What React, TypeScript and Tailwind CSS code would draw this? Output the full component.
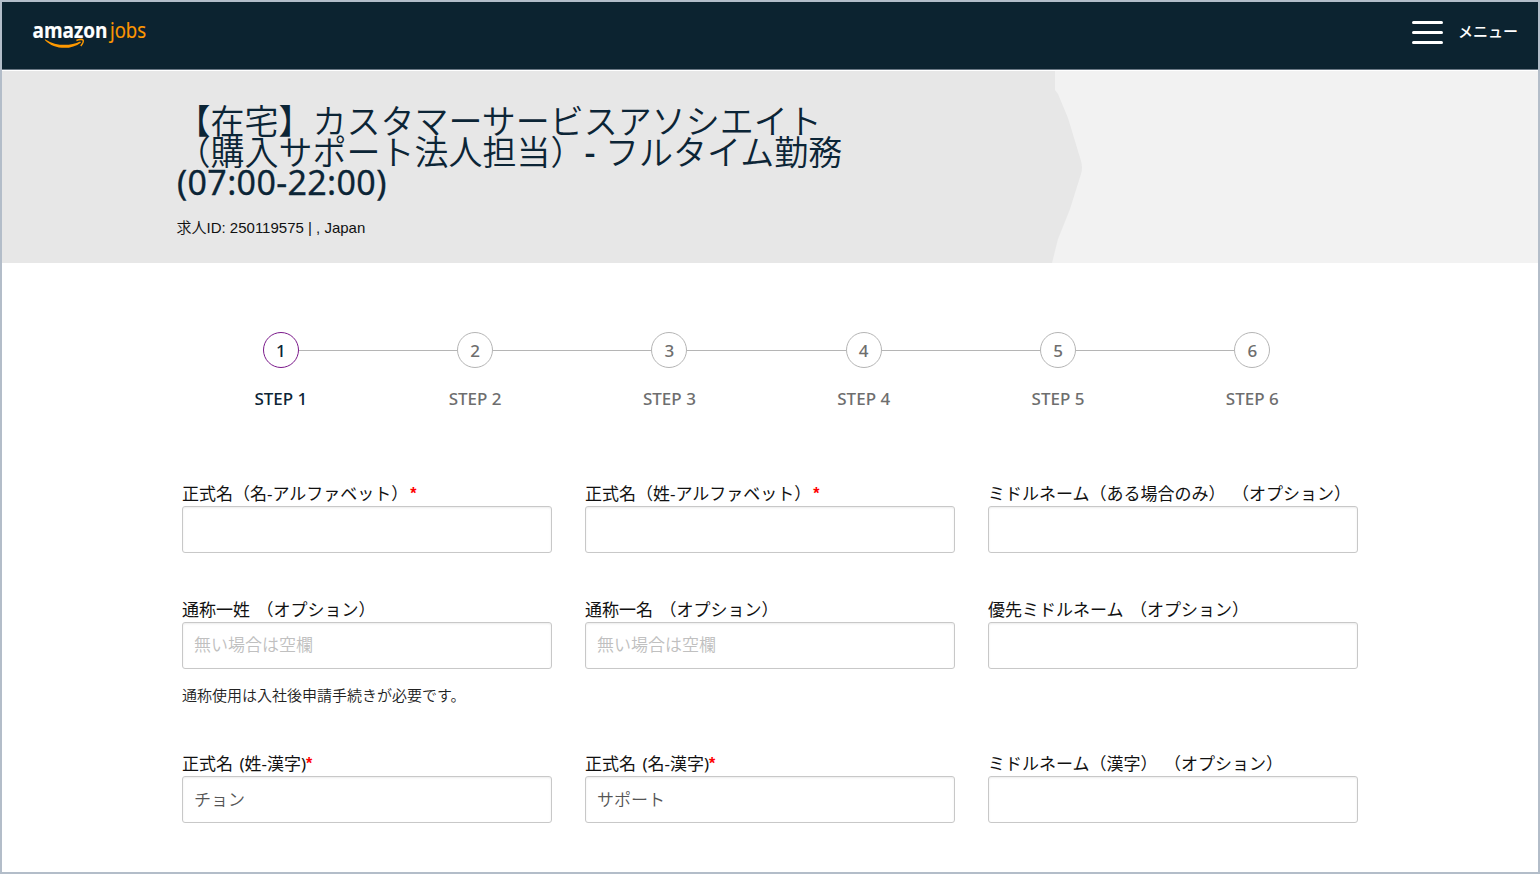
import clsx from "clsx";

interface Field {
  label: string;
  required?: boolean;
  placeholder?: string;
  value?: string;
  hint?: string;
}

const steps = [1, 2, 3, 4, 5, 6];

const rows: Field[][] = [
  [
    { label: "正式名（名-アルファベット）", required: true },
    { label: "正式名（姓-アルファベット）", required: true },
    { label: "ミドルネーム（ある場合のみ） （オプション）" },
  ],
  [
    {
      label: "通称一姓 （オプション）",
      placeholder: "無い場合は空欄",
      hint: "通称使用は入社後申請手続きが必要です。",
    },
    { label: "通称一名 （オプション）", placeholder: "無い場合は空欄" },
    { label: "優先ミドルネーム （オプション）" },
  ],
  [
    { label: "正式名 (姓-漢字)", required: true, value: "チョン" },
    { label: "正式名 (名-漢字)", required: true, value: "サポート" },
    { label: "ミドルネーム（漢字） （オプション）" },
  ],
];

function Logo() {
  return (
    <svg
      className="overflow-visible"
      width="118"
      height="34"
      viewBox="0 0 118 34"
      aria-label="amazon jobs"
    >
      <g fontFamily="'Open Sans', 'Noto Sans', sans-serif">
        <text
          x="1.5"
          y="22"
          fontSize="22"
          fontWeight="700"
          fill="#fff"
          stroke="#fff"
          strokeWidth="0.2"
          textLength="75"
          lengthAdjust="spacingAndGlyphs"
        >
          amazon
        </text>
        <text
          x="79"
          y="22"
          fontSize="22.5"
          fill="#ff9900"
          stroke="#ff9900"
          strokeWidth="0.2"
          textLength="36"
          lengthAdjust="spacingAndGlyphs"
        >
          jobs
        </text>
      </g>
      <path
        d="M14 24.2C23 33.6 40 34.4 50 26.4L49.2 25.4C39 30.4 25 30.2 14.4 23.4C13.8 23.2 13.6 23.8 14 24.2Z"
        fill="#ff9900"
      />
      <path
        d="M45.4 24.5C48.2 23.4 51.4 23.3 52 24C52.6 24.9 51.4 28 49.8 30"
        fill="none"
        stroke="#ff9900"
        strokeWidth="1.5"
      />
    </svg>
  );
}

function Header() {
  return (
    <header className="flex h-[68px] items-start justify-between border-b border-[#6b7885] bg-[#0c2330] pr-5 pl-[29px]">
      <div className="pt-[14px]">
        <Logo />
      </div>
      <button className="flex items-start gap-[15px] pt-[19px]">
        <span className="flex w-[31px] flex-col gap-[7px]">
          <span className="h-[3px] rounded-full bg-white" />
          <span className="h-[3px] rounded-full bg-white" />
          <span className="h-[3px] rounded-full bg-white" />
        </span>
        <span className="-mt-0.5 text-[15px] leading-6 font-medium text-white">
          メニュー
        </span>
      </button>
    </header>
  );
}

function Hero() {
  return (
    <section className="relative mt-px h-[192px] bg-[#f2f2f2]">
      <svg
        className="absolute inset-0"
        width="1082"
        height="192"
        viewBox="0 0 1082 192"
      >
        <path
          d="M0 0H1053V19L1056 23L1066 47L1079 90Q1081 97 1079 103L1068 138L1056 168L1050 192H0Z"
          fill="#e7e7e7"
        />
      </svg>
      <div className="relative pt-[35px] pl-[174.5px] text-[#0c2536]">
        <h1 className="text-[34px] leading-[30.5px] font-normal whitespace-nowrap">
          <span className="block font-[350]">
            【在宅】カスタマーサービスアソシエイト
          </span>
          <span className="block font-[350] [word-spacing:0.7px]">
            （購入サポート法人担当）
            <span className="font-medium">-</span> フルタイム勤務
          </span>
          <span className="block pl-[0.5px] tracking-[0.35px] [-webkit-text-stroke:0.3px_#0c2536]">
            (07:00-22:00)
          </span>
        </h1>
        <p className="mt-5 font-['Liberation_Sans','Noto_Sans_CJK_JP',sans-serif] text-[15px] leading-5 text-[#111]">
          <span className="font-[350]">求人</span>ID: 250119575 | , Japan
        </p>
      </div>
    </section>
  );
}

function Stepper() {
  return (
    <ol className="mt-[69px] ml-[181.7px] flex">
      {steps.map((step, i) => {
        const active = i === 0;
        return (
          <li
            key={step}
            className={clsx(
              "flex w-[194.3px] flex-col font-medium",
              active ? "text-[#0c2536]" : "text-[#6e6e6e]"
            )}
          >
            <div className="flex items-center">
              <span
                className={clsx("h-px flex-1", !active && "bg-[#b5b5b5]")}
              />
              <span
                className={clsx(
                  "flex size-9 items-center justify-center rounded-full border pt-px text-[17px]",
                  active ? "border-[#7b1a8b]" : "border-[#b5b5b5]"
                )}
              >
                {step}
              </span>
              <span
                className={clsx(
                  "h-px flex-1",
                  i < steps.length - 1 && "bg-[#b5b5b5]"
                )}
              />
            </div>
            <span className="mt-[19px] text-center text-[17px] leading-6">
              STEP {step}
            </span>
          </li>
        );
      })}
    </ol>
  );
}

function FormField({ label, required, placeholder, value, hint }: Field) {
  return (
    <div className="w-[370px]">
      <label className="block text-[17px] leading-6 [word-spacing:2px] whitespace-nowrap text-[#111]">
        {label}
        {required && (
          <span
            className={clsx(
              "align-[1px] font-['Liberation_Sans',sans-serif] text-base leading-none font-bold text-[#f00]",
              label.endsWith("）") && "ml-0.5"
            )}
          >
            *
          </span>
        )}
      </label>
      <input
        className="block h-[47px] w-full rounded-[3px] border border-[#c8c8c8] bg-white px-[11px] pb-[3px] text-[17px] font-[350] text-[#555] shadow-[inset_0_1px_2px_rgba(0,0,0,0.08)] placeholder:text-[#c0c0c0]"
        placeholder={placeholder}
        defaultValue={value}
      />
      {hint && (
        <p className="mt-[15px] text-[15px] leading-[22px] font-[350] text-[#222]">
          {hint}
        </p>
      )}
    </div>
  );
}

export default function App() {
  return (
    <div className="h-[874px] overflow-hidden border-2 border-[#b3bdc9] bg-white font-['Noto_Sans','Noto_Sans_CJK_JP',sans-serif]">
      <Header />
      <Hero />
      <main>
        <Stepper />
        <form className="mt-[71px] ml-[180px] flex flex-col">
          {rows.map((row, i) => (
            <div
              key={i}
              className={clsx(
                "flex gap-[33px]",
                i === 0 && "h-[116px]",
                i === 1 && "h-[154px]"
              )}
            >
              {row.map((field) => (
                <FormField key={field.label} {...field} />
              ))}
            </div>
          ))}
        </form>
      </main>
    </div>
  );
}
